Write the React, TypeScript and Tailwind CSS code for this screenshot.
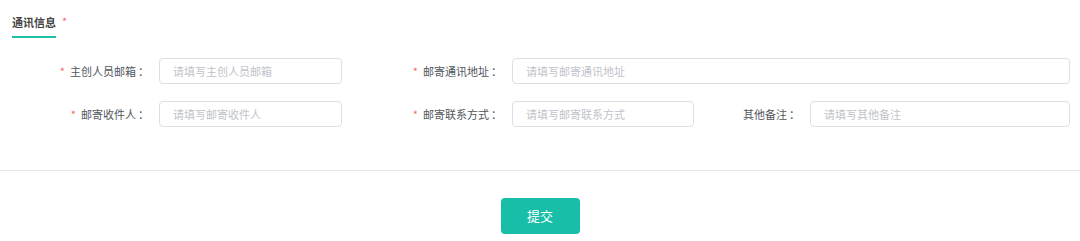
import React from "react"

const font = "font-['Noto_Sans_CJK_SC','Noto_Sans',sans-serif]"

function Label({ text, required, width }: { text: string; required?: boolean; width: string }) {
  return (
    <label className={`${width} shrink-0 flex items-center justify-end h-[26px] text-[11px] text-[#51565c]`}>
      {required && <span className="text-[#f56c6c] mr-[5px] text-[11px]">*</span>}
      <span>{text}</span>
      <span className="ml-[2px] w-[11px]">：</span>
    </label>
  )
}

function Field({ placeholder, width }: { placeholder: string; width: string }) {
  return (
    <input
      type="text"
      placeholder={placeholder}
      className={`${width} ml-[10px] h-[26px] shrink-0 rounded-[4px] border border-[#dcdfe6] bg-white pl-[13px] text-[11px] text-[#555] placeholder:text-[#bfc3ca] focus:outline-none`}
    />
  )
}

export default function App() {
  return (
    <div className={`w-[1080px] h-[241px] bg-white overflow-hidden ${font}`}>
      <div className="flex items-start pl-[12px] pt-[14px]">
        <div className="text-[11px] font-bold leading-[16px] text-[#444] pb-[6px] border-b-2 border-[#1fbfa9]">
          通讯信息
        </div>
        <span className="ml-[6px] text-[11px] leading-[14px] text-[#f56c6c]">*</span>
      </div>

      <div className="mt-[20px]">
        <div className="flex items-center">
          <Label text="主创人员邮箱" required width="w-[149px]" />
          <Field placeholder="请填写主创人员邮箱" width="w-[183px]" />
          <Label text="邮寄通讯地址" required width="w-[160px]" />
          <Field placeholder="请填写邮寄通讯地址" width="w-[558px]" />
        </div>
        <div className="flex items-center mt-[17px]">
          <Label text="邮寄收件人" required width="w-[149px]" />
          <Field placeholder="请填写邮寄收件人" width="w-[183px]" />
          <Label text="邮寄联系方式" required width="w-[160px]" />
          <Field placeholder="请填写邮寄联系方式" width="w-[182px]" />
          <Label text="其他备注" width="w-[106px]" />
          <Field placeholder="请填写其他备注" width="w-[260px]" />
        </div>
      </div>

      <div className="mt-[43px] border-t border-[#e6e6e6]" />

      <div className="flex justify-center mt-[27px]">
        <button className="w-[79px] h-[36px] rounded-[4px] bg-[#19bea8] text-[13px] text-white">
          提交
        </button>
      </div>
    </div>
  )
}
